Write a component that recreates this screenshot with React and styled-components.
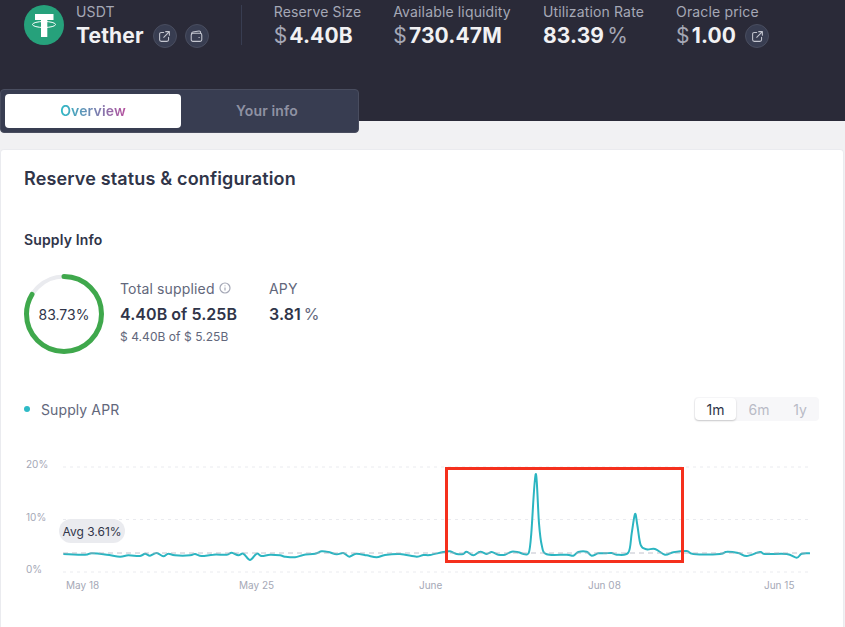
import React from 'react';
import styled, { createGlobalStyle } from 'styled-components';

const GlobalStyle = createGlobalStyle`
  html, body {
    margin: 0;
    height: 627px;
    overflow: hidden;
    background: #f1f1f3;
    font-family: Inter, "Liberation Sans", sans-serif;
    color: #303549;
  }
  * {
    box-sizing: border-box;
  }
`;

const Header = styled.header`
  height: 121px;
  padding: 4px 24px 0;
  background: #2a2a38;
  display: flex;
  align-items: flex-start;
`;

const TokenLogo = styled.svg`
  width: 40px;
  height: 40px;
  margin: 1px 12px 0 0;
  flex: none;
`;

const Stat = styled.div`
  display: flex;
  flex-direction: column;
`;

const Label = styled.div`
  font-size: 14px;
  line-height: 16px;
  height: 16px;
  letter-spacing: 0.15px;
  color: #a5a8b6;
`;

const ValueRow = styled.div`
  display: flex;
  align-items: center;
  height: 24px;
  margin-top: 4px;
  font-size: 21px;
  line-height: 24px;
  font-weight: 700;
  letter-spacing: 0.15px;
  color: #f1f1f3;
`;

const Unit = styled.span`
  font-weight: 400;
  color: #a5a8b6;
  margin-right: ${(p) => (p.$after ? 0 : '2px')};
  margin-left: ${(p) => (p.$after ? '3px' : 0)};
`;

const IconButton = styled.span`
  width: 24px;
  height: 24px;
  margin-left: 9px;
  border-radius: 50%;
  background: #383d51;
  border: 1px solid #494d5f;
  display: inline-flex;
  align-items: center;
  justify-content: center;
  & + & {
    margin-left: 8px;
  }
  svg {
    width: 13px;
    height: 13px;
    fill: none;
    stroke: #c4c6d0;
    stroke-width: 1.3;
    stroke-linecap: round;
    stroke-linejoin: round;
  }
`;

const Divider = styled.div`
  width: 1px;
  height: 40px;
  margin: 1px 32px 0;
  background: #383d51;
`;

const Stats = styled.div`
  display: flex;
  gap: 32px;
`;

const TabBar = styled.div`
  position: relative;
  width: 359px;
  height: 44px;
  margin-top: -32px;
  padding: 4px;
  display: flex;
  background: #383d51;
  border: 1px solid #494d5f;
  border-radius: 4px;
`;

const Tab = styled.div`
  width: ${(p) => (p.$active ? '176px' : '172px')};
  border-radius: 4px;
  background: ${(p) => (p.$active ? '#fff' : 'transparent')};
  color: #8f92a3;
  font-size: 14px;
  font-weight: 600;
  letter-spacing: 0.15px;
  display: flex;
  align-items: center;
  justify-content: center;
  padding-bottom: 1px;
`;

const GradientText = styled.span`
  background: linear-gradient(90deg, #2ebac6 0%, #b6509e 100%);
  -webkit-background-clip: text;
  background-clip: text;
  color: transparent;
`;

const Card = styled.section`
  width: 844px;
  height: 478px;
  margin-top: 16px;
  padding: 17px 23px 0;
  background: #fff;
  border: 1px solid #eaebef;
  border-bottom: 0;
  border-radius: 4px 4px 0 0;
`;

const Title = styled.h2`
  margin: 0;
  font-size: 18px;
  line-height: 24px;
  font-weight: 600;
  letter-spacing: 0.15px;
`;

const SubTitle = styled.h3`
  margin: 39px 0 0;
  font-size: 14px;
  line-height: 20px;
  font-weight: 600;
  letter-spacing: 0.15px;
`;

const InfoRow = styled.div`
  display: flex;
  align-items: flex-start;
  margin-top: 24px;
`;

const Donut = styled.div`
  position: relative;
  width: 80px;
  height: 80px;
  margin-right: 16px;
  svg {
    display: block;
  }
`;

const DonutLabel = styled.span`
  position: absolute;
  inset: 0;
  display: flex;
  align-items: center;
  justify-content: center;
  font-size: 14px;
`;

const InfoColumns = styled.div`
  display: flex;
  gap: 32px;
  padding-top: 5px;
`;

const InfoColumn = styled.div`
  display: flex;
  flex-direction: column;
`;

const InfoLabel = styled.div`
  display: flex;
  align-items: center;
  gap: 4px;
  height: 18px;
  font-size: 14px;
  letter-spacing: 0.15px;
  color: #62677b;
  svg {
    width: 12px;
    height: 12px;
    fill: none;
    stroke: #a5a8b6;
    stroke-width: 1.2;
  }
`;

const InfoValue = styled.div`
  margin-top: 7px;
  height: 20px;
  font-size: 16px;
  line-height: 20px;
  font-weight: 600;
  letter-spacing: 0.05px;
  span {
    font-weight: 400;
    margin-left: 3px;
    color: #62677b;
  }
`;

const InfoSub = styled.div`
  margin-top: 5px;
  font-size: 12px;
  line-height: 16px;
  letter-spacing: 0.05px;
  color: #62677b;
`;

const ChartHead = styled.div`
  display: flex;
  align-items: center;
  justify-content: space-between;
  height: 24px;
  margin-top: 43px;
`;

const Legend = styled.div`
  display: flex;
  align-items: center;
  gap: 11px;
  font-size: 14px;
  letter-spacing: 0.1px;
  color: #62677b;
`;

const Dot = styled.i`
  width: 6px;
  height: 6px;
  border-radius: 50%;
  background: #2ebac6;
`;

const Ranges = styled.div`
  display: flex;
  width: 125px;
  height: 24px;
  margin-right: 1px;
  padding: 1px;
  border-radius: 4px;
  background: #f7f7f9;
`;

const Range = styled.div`
  flex: 0 0 41px;
  display: flex;
  align-items: center;
  justify-content: center;
  font-size: 14px;
  border-radius: 4px;
  padding-left: ${(p) => (p.$active ? 0 : '5px')};
  color: ${(p) => (p.$active ? '#303549' : '#b9bbc6')};
  background: ${(p) => (p.$active ? '#fff' : 'transparent')};
  box-shadow: ${(p) => (p.$active ? '0 1px 2px rgba(0, 0, 0, 0.2)' : 'none')};
`;

const ChartWrap = styled.div`
  position: relative;
  width: 796px;
  height: 150px;
  margin-top: 29px;
  svg {
    display: block;
  }
`;

const AvgPill = styled.div`
  position: absolute;
  left: 35px;
  top: 69px;
  width: 66px;
  height: 24px;
  border-radius: 12px;
  background: #eaebef;
  display: flex;
  align-items: center;
  justify-content: center;
  font-size: 12px;
`;

const Highlight = styled.div`
  position: absolute;
  left: 421px;
  top: 17px;
  width: 239px;
  height: 96px;
  border: 3px solid #f5301d;
`;

const leftPts = [
  [190, 312], [255, 314], [275, 310], [320, 314], [360, 320], [385, 316], [420, 318], [435, 311], [450, 317],
  [470, 309], [490, 319], [505, 311], [525, 316], [570, 316], [585, 312], [605, 318], [640, 314], [680, 314],
  [695, 308], [715, 316], [730, 311], [750, 330], [770, 311], [785, 318], [810, 314], [840, 316], [855, 320],
  [885, 322], [910, 315], [945, 311], [965, 304], [985, 306], [1010, 313], [1030, 309], [1048, 320], [1068, 311],
  [1100, 316], [1130, 322], [1155, 315], [1200, 312], [1250, 320], [1270, 315],
];

const rightPts = [
  [0, 315], [40, 306], [60, 304], [80, 312], [100, 312], [110, 305], [130, 316], [150, 305], [170, 312], [185, 306],
  [205, 314], [225, 314], [245, 305], [265, 307], [285, 313], [297, 306], [304, 250], [317, 72], [327, 220], [335, 285],
  [350, 313], [410, 314], [430, 317], [445, 306], [470, 305], [485, 317], [505, 310], [525, 310], [545, 309], [560, 314],
  [595, 308], [605, 250], [615, 192], [622, 225], [632, 285], [650, 298], [675, 297], [705, 314], [730, 307], [770, 303],
  [790, 312], [870, 312], [890, 305], [925, 309], [950, 318], [990, 306], [1005, 312], [1070, 312], [1100, 323], [1115, 311],
  [1140, 310],
];

// zoom crops were at 3x, bring them back to chart coordinates
const points = [
  ...leftPts.map(([x, y]) => [x / 3 - 24, y / 3]),
  ...rightPts.map(([x, y]) => [430 + x / 3 - 24, y / 3]),
];

function smoothPath(pts) {
  let d = `M${pts[0][0]} ${pts[0][1]}`;
  for (let i = 0; i < pts.length - 1; i++) {
    const p0 = pts[i - 1] || pts[i];
    const p1 = pts[i];
    const p2 = pts[i + 1];
    const p3 = pts[i + 2] || p2;
    const c1 = [p1[0] + (p2[0] - p0[0]) / 6, p1[1] + (p2[1] - p0[1]) / 6];
    const c2 = [p2[0] - (p3[0] - p1[0]) / 6, p2[1] - (p3[1] - p1[1]) / 6];
    d += ` C${c1[0].toFixed(1)} ${c1[1].toFixed(1)} ${c2[0].toFixed(1)} ${c2[1].toFixed(1)} ${p2[0].toFixed(1)} ${p2[1].toFixed(1)}`;
  }
  return d;
}

const gridLines = [
  { y: 17, label: '20%' },
  { y: 69.5, label: '10%' },
  { y: 122, label: '0%' },
];

const xLabels = [
  { x: 42, label: 'May 18' },
  { x: 215, label: 'May 25' },
  { x: 395, label: 'June' },
  { x: 564, label: 'Jun 08' },
  { x: 740, label: 'Jun 15' },
];

const LinkIcon = () => (
  <svg viewBox="0 0 16 16">
    <path d="M7 3H4a2 2 0 0 0-2 2v7a2 2 0 0 0 2 2h7a2 2 0 0 0 2-2V9" />
    <path d="M9.5 2H14v4.5M14 2L7 9" />
  </svg>
);

const WalletIcon = () => (
  <svg viewBox="0 0 16 16">
    <rect x="1.5" y="4" width="13" height="10" rx="2" />
    <path d="M2 5.5V4.2c0-.9.6-1.6 1.5-1.8l7.6-1.2c1-.1 1.9.6 1.9 1.6V4" />
    <path d="M11 9.2h.4" />
  </svg>
);

const Chart = () => (
  <svg width="796" height="150" viewBox="0 0 796 150" fontFamily="Inter, sans-serif" fontSize="10">
    {gridLines.map((g) => (
      <g key={g.label}>
        <line x1="39" x2="786" y1={g.y} y2={g.y} stroke="#eaebef" strokeDasharray="3 4" />
        <text x="2" y={g.y + 1} fill="#a5a8b6">
          {g.label}
        </text>
      </g>
    ))}
    {xLabels.map((l) => (
      <text key={l.label} x={l.x} y="139" fill="#a5a8b6">
        {l.label}
      </text>
    ))}
    <path d={smoothPath(points)} fill="none" stroke="#2bb5c1" strokeWidth="2" strokeLinejoin="round" />
    <line x1="39" x2="786" y1="103" y2="103" stroke="#a5a8b6" strokeOpacity="0.7" strokeDasharray="5 4" />
  </svg>
);

export default function App() {
  return (
    <>
      <GlobalStyle />
      <Header>
        <TokenLogo viewBox="0 0 40 40">
          <circle cx="20" cy="20" r="20" fill="#26a17b" />
          <path fill="#fff" d="M11 9h18.5v6h-6.2v17h-6.3V15H11z" />
          <ellipse cx="20" cy="19.5" rx="11.5" ry="3" fill="none" stroke="#fff" strokeWidth="1" />
        </TokenLogo>
        <Stat>
          <Label>USDT</Label>
          <ValueRow>
            Tether
            <IconButton>
              <LinkIcon />
            </IconButton>
            <IconButton>
              <WalletIcon />
            </IconButton>
          </ValueRow>
        </Stat>
        <Divider />
        <Stats>
          <Stat>
            <Label>Reserve Size</Label>
            <ValueRow>
              <Unit>$</Unit>4.40B
            </ValueRow>
          </Stat>
          <Stat>
            <Label>Available liquidity</Label>
            <ValueRow>
              <Unit>$</Unit>730.47M
            </ValueRow>
          </Stat>
          <Stat>
            <Label>Utilization Rate</Label>
            <ValueRow>
              83.39<Unit $after>%</Unit>
            </ValueRow>
          </Stat>
          <Stat>
            <Label>Oracle price</Label>
            <ValueRow>
              <Unit>$</Unit>1.00
              <IconButton>
                <LinkIcon />
              </IconButton>
            </ValueRow>
          </Stat>
        </Stats>
      </Header>
      <TabBar>
        <Tab $active>
          <GradientText>Overview</GradientText>
        </Tab>
        <Tab>Your info</Tab>
      </TabBar>
      <Card>
        <Title>Reserve status &amp; configuration</Title>
        <SubTitle>Supply Info</SubTitle>
        <InfoRow>
          <Donut>
            <svg width="80" height="80" viewBox="0 0 80 80">
              <circle cx="40" cy="40" r="37.5" fill="none" stroke="#eaebef" strokeWidth="4" />
              <circle
                cx="40"
                cy="40"
                r="37.5"
                fill="none"
                stroke="#3fa84c"
                strokeWidth="5"
                strokeLinecap="round"
                pathLength="100"
                strokeDasharray="83.73 100"
                transform="rotate(-90 40 40)"
              />
            </svg>
            <DonutLabel>83.73%</DonutLabel>
          </Donut>
          <InfoColumns>
            <InfoColumn>
              <InfoLabel>
                Total supplied
                <svg viewBox="0 0 12 12">
                  <circle cx="6" cy="6" r="5" />
                  <path d="M6 5.4v3M6 3.4v.8" />
                </svg>
              </InfoLabel>
              <InfoValue>4.40B of 5.25B</InfoValue>
              <InfoSub>$ 4.40B of $ 5.25B</InfoSub>
            </InfoColumn>
            <InfoColumn>
              <InfoLabel>APY</InfoLabel>
              <InfoValue>
                3.81<span>%</span>
              </InfoValue>
            </InfoColumn>
          </InfoColumns>
        </InfoRow>
        <ChartHead>
          <Legend>
            <Dot />
            Supply APR
          </Legend>
          <Ranges>
            <Range $active>1m</Range>
            <Range>6m</Range>
            <Range>1y</Range>
          </Ranges>
        </ChartHead>
        <ChartWrap>
          <Chart />
          <AvgPill>Avg 3.61%</AvgPill>
          <Highlight />
        </ChartWrap>
      </Card>
    </>
  );
}
